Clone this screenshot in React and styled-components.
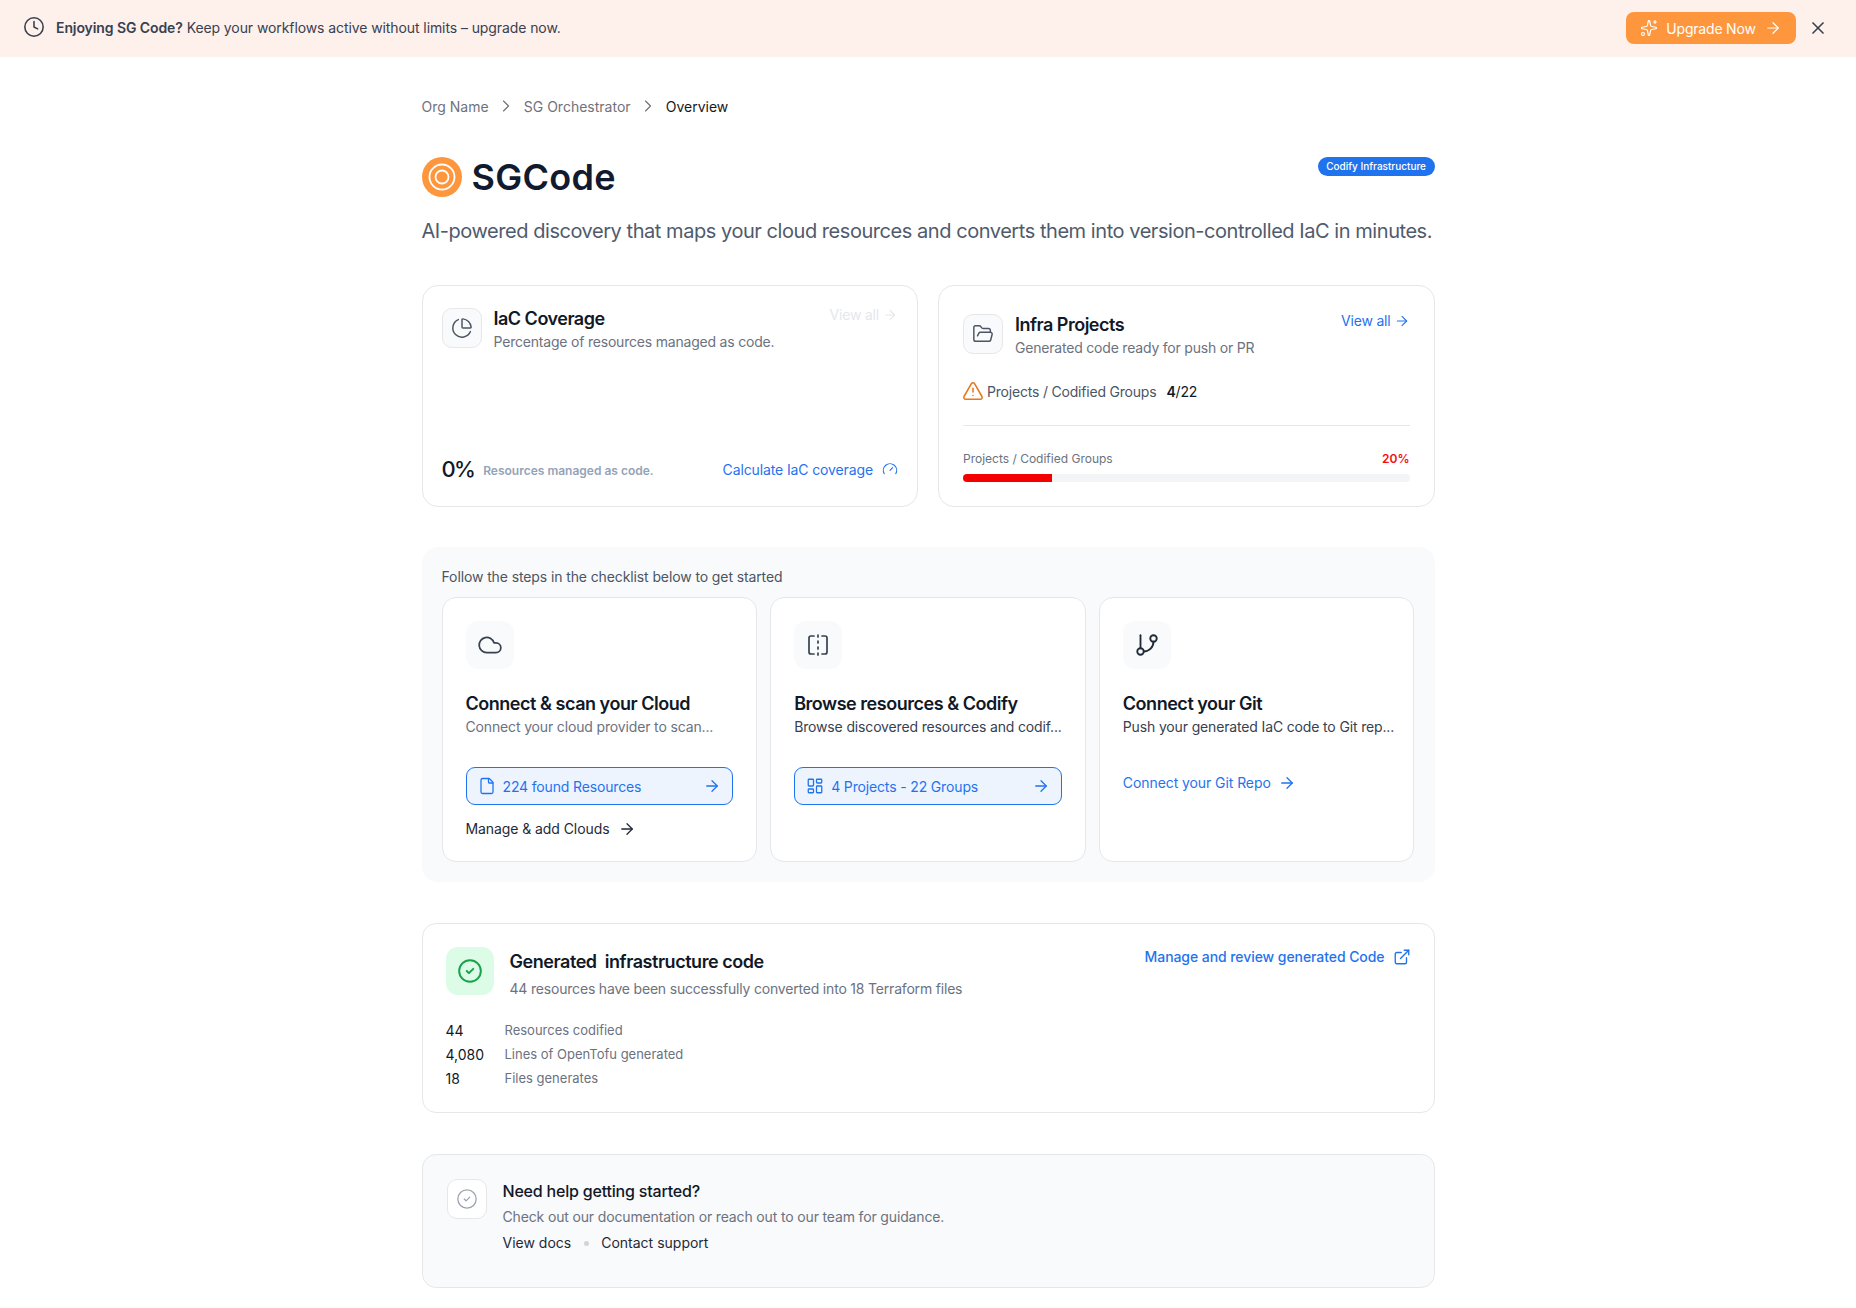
import React from 'react'
import styled, { createGlobalStyle } from 'styled-components'
import {
  ArrowRight, ChevronRight, CircleCheck, Clock, Cloud, ExternalLink, File, FlipHorizontal, FolderOpen, Gauge,
  LayoutDashboard, PieChart, Sparkles, TriangleAlert, X,
} from 'lucide-react'

const blue = '#1f73ee'
const ink = '#111827'
const slate = '#4b5563'
const muted = '#6b7280'
const line = '#e5e7eb'

const GlobalStyle = createGlobalStyle`
  * { box-sizing: border-box; }
  html, body { margin: 0; background: #fff; }
  body { font-family: Inter, "Noto Sans", sans-serif; color: ${ink}; }
`

// lucide's current git-branch has a different curve, so this one is drawn by hand
const GitIcon = () => (
  <svg width="26" height="26" viewBox="0 0 24 24" fill="none" stroke="#1f2937" strokeWidth="1.7" strokeLinecap="round" strokeLinejoin="round">
    <line x1="6" y1="3" x2="6" y2="15" />
    <circle cx="18" cy="6" r="3" />
    <circle cx="6" cy="18" r="3" />
    <path d="M18 9a9 9 0 0 1-9 9" />
  </svg>
)

const App = () => {
  return (
    <>
      <GlobalStyle />
      <Banner>
        <BannerText>
          <Clock size={22} color="#374151" strokeWidth={1.7} />
          <p><b>Enjoying SG Code?</b> Keep your workflows active without limits – upgrade now.</p>
        </BannerText>
        <BannerActions>
          <UpgradeButton>
            <Sparkles size={18} strokeWidth={1.6} />
            Upgrade Now
            <ArrowRight size={18} strokeWidth={1.6} />
          </UpgradeButton>
          <X size={20} color="#374151" />
        </BannerActions>
      </Banner>

      <Page>
        <Breadcrumb>
          <span>Org Name</span>
          <ChevronRight size={20} strokeWidth={1.4} />
          <span>SG Orchestrator</span>
          <ChevronRight size={20} strokeWidth={1.4} />
          <strong>Overview</strong>
        </Breadcrumb>

        <TitleRow>
          <Logo>
            <svg width="40" height="40" viewBox="0 0 40 40">
              <circle cx="20" cy="20" r="20" fill="#fd963c" />
              <circle cx="20" cy="20" r="12.5" fill="none" stroke="#fff" strokeWidth="1.8" />
              <circle cx="20" cy="20" r="6.5" fill="none" stroke="#fff" strokeWidth="1.8" />
            </svg>
            <h1>SGCode</h1>
          </Logo>
          <Pill>Codify Infrastructure</Pill>
        </TitleRow>
        <Subtitle>AI-powered discovery that maps your cloud resources and converts them into version-controlled IaC in minutes.</Subtitle>

        <TopCards>
          <Card $pad="22px 19px 23px">
            <CardHead>
              <IconTile><PieChart size={22} strokeWidth={1.6} /></IconTile>
              <HeadText>
                <h3>IaC Coverage</h3>
                <p>Percentage of resources managed as code.</p>
              </HeadText>
              <ViewAll $faded>View all <ArrowRight size={16} strokeWidth={1.6} /></ViewAll>
            </CardHead>
            <CoverageFoot>
              <Percent>0%</Percent>
              <FootNote>Resources managed as code.</FootNote>
              <CalcLink>Calculate IaC coverage <Gauge size={16} strokeWidth={1.6} /></CalcLink>
            </CoverageFoot>
          </Card>

          <Card $pad="28px 24px 24px">
            <CardHead>
              <IconTile><FolderOpen size={22} strokeWidth={1.6} /></IconTile>
              <HeadText>
                <h3>Infra Projects</h3>
                <p>Generated code ready for push or PR</p>
              </HeadText>
              <ViewAll>View all <ArrowRight size={16} strokeWidth={1.6} /></ViewAll>
            </CardHead>
            <Warning>
              <TriangleAlert size={22} color="#e8791a" strokeWidth={1.7} />
              <span>Projects / Codified Groups</span>
              <em><b>4</b>/22</em>
            </Warning>
            <Divider />
            <ProgressLabel>
              <span>Projects / Codified Groups</span>
              <b>20%</b>
            </ProgressLabel>
            <Track><Fill style={{ width: '20%' }} /></Track>
          </Card>
        </TopCards>

        <Steps>
          <StepsIntro>Follow the steps in the checklist below to get started</StepsIntro>
          <StepGrid>
            <StepCard>
              <StepIcon><Cloud size={26} strokeWidth={1.6} /></StepIcon>
              <h3>Connect &amp; scan your Cloud</h3>
              <StepDesc $tone={muted}>Connect your cloud provider to scan...</StepDesc>
              <OutlineButton>
                <File size={18} strokeWidth={1.7} />
                <span>224 found Resources</span>
                <ArrowRight size={18} strokeWidth={1.7} />
              </OutlineButton>
              <PlainLink>Manage &amp; add Clouds <ArrowRight size={18} strokeWidth={1.7} /></PlainLink>
            </StepCard>

            <StepCard>
              <StepIcon><FlipHorizontal size={24} strokeWidth={1.7} /></StepIcon>
              <h3>Browse resources &amp; Codify</h3>
              <StepDesc>Browse discovered resources and codif...</StepDesc>
              <OutlineButton>
                <LayoutDashboard size={18} strokeWidth={1.7} />
                <span>4 Projects - 22 Groups</span>
                <ArrowRight size={18} strokeWidth={1.7} />
              </OutlineButton>
            </StepCard>

            <StepCard>
              <StepIcon><GitIcon /></StepIcon>
              <h3>Connect your Git</h3>
              <StepDesc>Push your generated IaC code to Git rep...</StepDesc>
              <GitLink>Connect your Git Repo <ArrowRight size={18} strokeWidth={1.7} /></GitLink>
            </StepCard>
          </StepGrid>
        </Steps>

        <Generated>
          <GenHead>
            <GreenTile><CircleCheck size={26} strokeWidth={1.8} /></GreenTile>
            <GenText>
              <h3>Generated&nbsp; infrastructure code</h3>
              <p>44 resources have been successfully converted into 18 Terraform files</p>
            </GenText>
            <ReviewLink>Manage and review generated Code <ExternalLink size={18} strokeWidth={1.8} /></ReviewLink>
          </GenHead>
          <Stats>
            <b>44</b><span>Resources codified</span>
            <b>4,080</b><span>Lines of OpenTofu generated</span>
            <b>18</b><span>Files generates</span>
          </Stats>
        </Generated>

        <Help>
          <HelpTile><CircleCheck size={22} strokeWidth={1.4} /></HelpTile>
          <div>
            <h3>Need help getting started?</h3>
            <p>Check out our documentation or reach out to our team for guidance.</p>
            <HelpLinks>
              <span>View docs</span>
              <i />
              <span>Contact support</span>
            </HelpLinks>
          </div>
        </Help>
      </Page>
    </>
  )
}

export default App

const Banner = styled.div`
  height: 57px;
  background: #fef0eb;
  display: flex;
  align-items: center;
  justify-content: space-between;
  padding: 0 28px 1px 23px;
`

const BannerText = styled.div`
  display: flex;
  align-items: center;
  gap: 11px;
  margin-bottom: 2px;
  font-size: 14px;
  letter-spacing: -0.09px;
  color: #374151;

  p { margin: 0; }
  b { font-weight: 600; }
`

const BannerActions = styled.div`
  display: flex;
  align-items: center;
  gap: 12px;
`

const UpgradeButton = styled.button`
  width: 170px;
  height: 32px;
  padding: 0;
  border: none;
  border-radius: 8px;
  background: #fd963c;
  color: #fff;
  font: 400 14px Inter, sans-serif;
  letter-spacing: -0.2px;
  display: flex;
  align-items: center;
  justify-content: center;
  gap: 8px;
`

const Page = styled.main`
  width: 1013px;
  margin: 0 auto;
  padding-top: 40px;
`

const Breadcrumb = styled.nav`
  display: flex;
  align-items: center;
  gap: 7.6px;
  height: 18px;
  font-size: 14px;
  color: #71717a;

  strong { font-weight: 400; color: #18181b; }
`

const TitleRow = styled.div`
  display: flex;
  justify-content: space-between;
  align-items: flex-start;
  margin-top: 42px;
`

const Logo = styled.div`
  display: flex;
  align-items: center;
  gap: 10px;

  h1 {
    margin: 0;
    font-size: 36px;
    line-height: 40px;
    font-weight: 600;
    letter-spacing: 0.3px;
    color: #111a2e;
  }
`

const Pill = styled.span`
  height: 19px;
  padding: 0 8.5px;
  border-radius: 10px;
  background: ${blue};
  color: #fff;
  font-size: 10px;
  font-weight: 500;
  line-height: 19px;
`

const Subtitle = styled.p`
  margin: 20px 0 0;
  font-size: 20px;
  line-height: 28px;
  letter-spacing: -0.45px;
  color: #4f5b6d;
  white-space: nowrap;
`

const TopCards = styled.section`
  display: grid;
  grid-template-columns: 1fr 1fr;
  gap: 20px;
  margin-top: 40px;
`

const Card = styled.article`
  height: 222px;
  padding: ${p => p.$pad};
  border: 1px solid ${line};
  border-radius: 16px;
  background: #fff;
  display: flex;
  flex-direction: column;
`

const CardHead = styled.header`
  display: flex;
  align-items: flex-start;
  gap: 12px;
`

const IconTile = styled.div`
  flex: none;
  width: 40px;
  height: 40px;
  border: 1px solid ${line};
  border-radius: 10px;
  background: #f9fafb;
  color: #4b5563;
  display: flex;
  align-items: center;
  justify-content: center;
`

const HeadText = styled.div`
  flex: 1;
  margin-top: -1px;

  h3 {
    margin: 0;
    font-size: 18px;
    line-height: 24px;
    font-weight: 600;
    letter-spacing: -0.5px;
    color: ${ink};
  }

  p {
    margin: 0;
    font-size: 14px;
    line-height: 22px;
    letter-spacing: -0.2px;
    color: ${muted};
  }
`

const ViewAll = styled.a`
  display: flex;
  align-items: center;
  gap: 3px;
  margin-top: -3px;
  font-size: 14px;
  line-height: 20px;
  letter-spacing: -0.2px;
  color: ${p => (p.$faded ? '#e5e7eb' : blue)};
`

const CoverageFoot = styled.div`
  margin-top: auto;
  display: flex;
  align-items: center;
`

const Percent = styled.span`
  font-size: 22px;
  line-height: 28px;
  font-weight: 500;
  letter-spacing: -1.7px;
  color: ${ink};
`

const FootNote = styled.span`
  margin: 3px 0 0 9px;
  font-size: 12px;
  font-weight: 600;
  color: #94a3b8;
`

const CalcLink = styled.a`
  margin-left: auto;
  display: flex;
  align-items: center;
  gap: 9px;
  font-size: 14px;
  letter-spacing: -0.12px;
  color: ${blue};
`

const Warning = styled.div`
  display: flex;
  align-items: center;
  gap: 3px;
  margin: 20px 0 0 -1px;
  height: 24px;
  font-size: 14px;
  letter-spacing: -0.2px;
  color: ${slate};

  em {
    font-style: normal;
    margin-left: 7px;
    color: ${ink};
  }

  b { font-weight: 600; }
`

const Divider = styled.hr`
  width: 100%;
  margin: 22px 0 0;
  border: none;
  border-top: 1px solid ${line};
`

const ProgressLabel = styled.div`
  display: flex;
  justify-content: space-between;
  margin-top: 25px;
  font-size: 12px;
  line-height: 16px;
  color: ${muted};

  b { font-weight: 600; color: #f30d0d; }
`

const Track = styled.div`
  height: 8px;
  margin-top: 7px;
  border-radius: 4px;
  background: #f3f4f6;
  overflow: hidden;
`

const Fill = styled.div`
  height: 100%;
  background: #f50000;
`

const Steps = styled.section`
  margin-top: 40px;
  padding: 20px;
  border-radius: 16px;
  background: #f9fafb;
`

const StepsIntro = styled.p`
  margin: 0;
  font-size: 14px;
  line-height: 20px;
  letter-spacing: -0.11px;
  color: ${slate};
`

const StepGrid = styled.div`
  display: grid;
  grid-template-columns: repeat(3, minmax(0, 1fr));
  gap: 13px;
  margin-top: 10px;
`

const StepCard = styled.article`
  height: 265px;
  padding: 23px 23px 0;
  border: 1px solid ${line};
  border-radius: 14px;
  background: #fff;
  display: flex;
  flex-direction: column;
  align-items: stretch;

  h3 {
    margin: 23px 0 0;
    font-size: 18px;
    line-height: 24px;
    font-weight: 600;
    letter-spacing: -0.47px;
    color: ${ink};
  }
`

const StepIcon = styled.div`
  width: 48px;
  height: 48px;
  border-radius: 12px;
  background: #f9fafb;
  color: #374151;
  display: flex;
  align-items: center;
  justify-content: center;
`

const StepDesc = styled.p`
  margin: 0;
  font-size: 14px;
  line-height: 22px;
  letter-spacing: -0.15px;
  white-space: nowrap;
  color: ${p => p.$tone || '#374151'};
`

const OutlineButton = styled.a`
  margin-top: 29px;
  height: 38px;
  padding: 0 11px;
  border: 1px solid ${blue};
  border-radius: 9px;
  background: #edf4fe;
  color: ${blue};
  font-size: 14px;
  letter-spacing: -0.15px;
  display: flex;
  align-items: center;
  gap: 7px;

  span { flex: 1; }
`

const PlainLink = styled.a`
  margin-top: 14px;
  display: flex;
  align-items: center;
  gap: 9px;
  font-size: 14px;
  line-height: 20px;
  letter-spacing: -0.08px;
  color: #1f2937;
`

const GitLink = styled(PlainLink)`
  margin-top: 35px;
  gap: 7px;
  color: ${blue};
`

const Generated = styled.section`
  height: 190px;
  margin-top: 41px;
  padding: 23px 23px;
  border: 1px solid ${line};
  border-radius: 14px;
`

const GenHead = styled.header`
  display: flex;
  align-items: flex-start;
  gap: 16px;
`

const GreenTile = styled.div`
  flex: none;
  width: 48px;
  height: 48px;
  border-radius: 12px;
  background: #dcfce7;
  color: #16a34a;
  display: flex;
  align-items: center;
  justify-content: center;
`

const GenText = styled.div`
  flex: 1;
  padding-top: 3px;

  h3 {
    margin: 0;
    font-size: 18px;
    line-height: 24px;
    font-weight: 600;
    letter-spacing: -0.45px;
    color: ${ink};
  }

  p {
    margin: 5px 0 0;
    font-size: 14px;
    line-height: 20px;
    letter-spacing: -0.19px;
    color: ${muted};
  }
`

const ReviewLink = styled.a`
  display: flex;
  align-items: center;
  gap: 8px;
  font-size: 14px;
  line-height: 20px;
  font-weight: 500;
  letter-spacing: -0.07px;
  color: ${blue};
`

const Stats = styled.div`
  display: grid;
  grid-template-columns: 59px 1fr;
  grid-auto-rows: 24px;
  align-items: center;
  margin-top: 19px;

  b { font-weight: 400; font-size: 14px; color: ${ink}; }
  span { font-size: 13px; color: ${muted}; }
`

const Help = styled.section`
  height: 134px;
  margin-top: 41px;
  padding: 24px;
  border: 1px solid ${line};
  border-radius: 14px;
  background: #f9fafb;
  display: flex;
  align-items: flex-start;
  gap: 16px;

  h3 {
    margin: 0;
    font-size: 16px;
    line-height: 24px;
    font-weight: 500;
    letter-spacing: -0.2px;
    color: ${ink};
  }

  p {
    margin: 2px 0 0;
    font-size: 14px;
    line-height: 24px;
    letter-spacing: -0.15px;
    color: ${muted};
  }
`

const HelpTile = styled.div`
  flex: none;
  width: 40px;
  height: 40px;
  border: 1px solid ${line};
  border-radius: 10px;
  background: #fff;
  color: #9ca3af;
  display: flex;
  align-items: center;
  justify-content: center;
`

const HelpLinks = styled.div`
  display: flex;
  align-items: center;
  gap: 12.5px;
  margin-top: 2px;
  font-size: 14px;
  line-height: 24px;
  color: #1f2937;

  i {
    width: 5px;
    height: 5px;
    border-radius: 50%;
    background: #d1d5db;
  }
`
